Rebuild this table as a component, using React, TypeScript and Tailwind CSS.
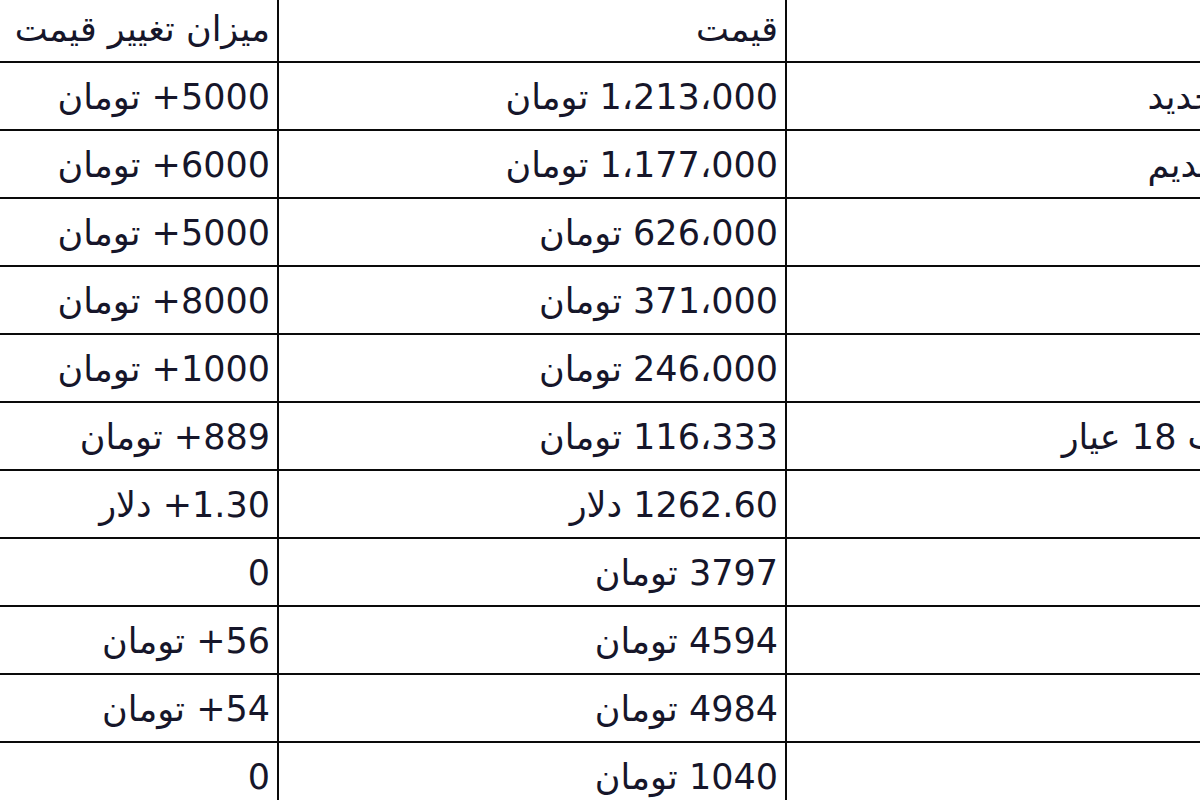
import React from "react";

const rows: [string, string, string][] = [
  ["میزان تغییر قیمت", "قیمت", ""],
  ["5000+ تومان", "1،213،000 تومان", "سکه طرح جدید"],
  ["6000+ تومان", "1،177،000 تومان", "سکه طرح قدیم"],
  ["5000+ تومان", "626،000 تومان", "نیم سکه"],
  ["8000+ تومان", "371،000 تومان", "ربع سکه"],
  ["1000+ تومان", "246،000 تومان", "سکه گرمی"],
  ["889+ تومان", "116،333 تومان", "طلای مذهـب 18 عیار"],
  ["1.30+ دلار", "1262.60 دلار", "انس طلا"],
  ["0", "3797 تومان", "دلار"],
  ["56+ تومان", "4594 تومان", "یورو"],
  ["54+ تومان", "4984 تومان", "پوند"],
  ["0", "1040 تومان", "درهم"],
];

export default function App() {
  return (
    <div
      className="w-[1200px] h-[800px] overflow-hidden bg-white text-[#16162a]"
      style={{ fontFamily: '"DejaVu Sans", Tahoma, sans-serif' }}
    >
      <div className="-mt-[5px] -ml-[40px] flex flex-col w-[1440px]">
        {rows.map((r, i) => (
          <div key={i} className="flex h-[68px] border-b-2 border-[#0a0a0a]">
            <div
              dir="rtl"
              className="w-[319px] shrink-0 border-r-2 border-[#0a0a0a] flex items-center pt-[3px] pr-[7px] text-[35px] whitespace-nowrap overflow-hidden"
            >
              {r[0]}
            </div>
            <div
              dir="rtl"
              className="w-[508px] shrink-0 border-r-2 border-[#0a0a0a] flex items-center pt-[3px] pr-[7px] text-[35px] whitespace-nowrap overflow-hidden"
            >
              {r[1]}
            </div>
            <div
              dir="rtl"
              className="w-[595px] shrink-0 flex items-center pt-[3px] pr-[7px] text-[35px] whitespace-nowrap overflow-hidden"
            >
              {r[2]}
            </div>
          </div>
        ))}
      </div>
    </div>
  );
}
